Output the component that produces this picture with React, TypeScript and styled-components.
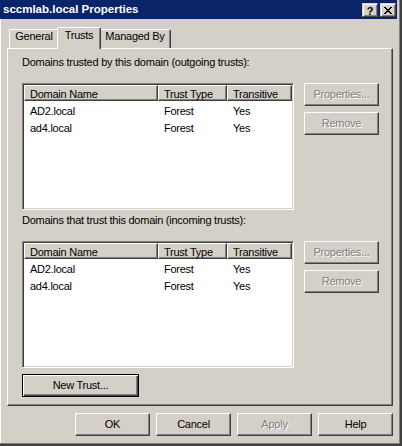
import React from "react";
import styled, { createGlobalStyle, css } from "styled-components";

const FACE = "#d4d0c8";
const SHADOW = "#808080";
const DARK = "#404040";
const HILITE = "#ffffff";
const CAPTION = "#0a246a";

const Global = createGlobalStyle`
  html, body { margin: 0; padding: 0; background: ${FACE}; }
  body { font-family: "Liberation Sans", Arial, sans-serif; font-size: 11px; }
  *, *::before, *::after { box-sizing: border-box; }
`;

const Window = styled.div`
  width: 402px;
  height: 446px;
  background: ${FACE};
  display: flex;
  flex-direction: column;
  box-shadow: inset -1px -1px 0 ${DARK}, inset -2px -2px 0 ${DARK},
    inset -3px -3px 0 ${SHADOW}, inset 1px 0 0 ${HILITE};
  color: #000;
  font-family: "Liberation Sans", Arial, sans-serif;
  font-size: 11px;
  letter-spacing: -0.25px;
  overflow: hidden;
`;

const TitleBar = styled.div`
  height: 19px;
  margin-right: 5px;
  background: ${CAPTION};
  display: flex;
  align-items: flex-start;
  justify-content: space-between;
  padding: 0 1px 0 3px;
`;

const TitleText = styled.span`
  color: #fff;
  font-weight: bold;
  font-size: 11.5px;
  line-height: 19px;
  letter-spacing: 0;
  white-space: nowrap;
`;

const CaptionButtons = styled.div`
  display: flex;
  gap: 2px;
  margin-top: 3px;
`;

const CaptionButton = styled.div`
  width: 16px;
  height: 14px;
  background: ${FACE};
  border: 1px solid;
  border-color: ${FACE} ${DARK} ${DARK} ${FACE};
  box-shadow: inset 1px 1px 0 ${HILITE}, inset -1px -1px 0 ${SHADOW};
  display: flex;
  align-items: center;
  justify-content: center;
  font-weight: bold;
  font-size: 11px;
  line-height: 12px;
  letter-spacing: 0;
  color: #000;
  padding-top: 1px;
`;

const TabStrip = styled.div`
  display: flex;
  align-items: flex-end;
  height: 21px;
  margin: 8px 0 0 9px;
`;

const Tab = styled.div<{ $active?: boolean; $w: number }>`
  width: ${(p) => p.$w}px;
  height: 19px;
  background: ${FACE};
  border-top: 1px solid ${HILITE};
  border-left: 1px solid ${HILITE};
  border-right: 1px solid ${DARK};
  box-shadow: inset -1px 0 0 ${SHADOW};
  border-radius: 2px 2px 0 0;
  line-height: 13px;
  text-align: center;
  white-space: nowrap;
  ${(p) =>
    p.$active &&
    css`
      height: 22px;
      margin: 0 -2px -1px;
      padding-top: 1px;
      position: relative;
      z-index: 1;
    `}
`;

const Panel = styled.div`
  margin-left: 7px;
  width: 386px;
  height: 358px;
  border: 1px solid;
  border-color: ${HILITE} ${DARK} ${DARK} ${HILITE};
  box-shadow: inset -1px -1px 0 ${SHADOW};
  padding: 7px 0 0 14px;
  display: flex;
  flex-direction: column;
  align-items: flex-start;
`;

const Label = styled.div<{ $gapTop?: number }>`
  line-height: 13px;
  margin-top: ${(p) => p.$gapTop ?? 0}px;
  white-space: nowrap;
`;

const ListRow = styled.div`
  display: grid;
  grid-template-columns: 272px 75px;
  column-gap: 10px;
  align-items: start;
  margin-top: 14px;
`;

const ListView = styled.div`
  width: 272px;
  height: 127px;
  background: #fff;
  border: 1px solid;
  border-color: ${SHADOW} ${HILITE} ${HILITE} ${SHADOW};
  box-shadow: inset 1px 1px 0 ${DARK}, inset -1px -1px 0 ${FACE};
  padding: 1px;
  overflow: hidden;
`;

const Header = styled.div`
  display: flex;
  height: 16px;
`;

const HeaderCell = styled.div<{ $w: number }>`
  width: ${(p) => p.$w}px;
  flex: none;
  height: 16px;
  background: ${FACE};
  border: 1px solid;
  border-color: ${HILITE} ${DARK} ${DARK} ${HILITE};
  box-shadow: inset -1px -1px 0 ${SHADOW};
  padding: 2px 0 0 5px;
  line-height: 12px;
  white-space: nowrap;
  overflow: hidden;
`;

const Row = styled.div`
  display: flex;
  height: 17px;
`;

const Cell = styled.div<{ $w: number }>`
  width: ${(p) => p.$w}px;
  flex: none;
  padding: 3px 0 0 6px;
  line-height: 14px;
  white-space: nowrap;
  overflow: hidden;
`;

const ButtonStack = styled.div`
  display: flex;
  flex-direction: column;
  gap: 6px;
`;

const Button = styled.button<{ $w?: number; $default?: boolean }>`
  width: ${(p) => p.$w ?? 75}px;
  height: 23px;
  flex: none;
  font: inherit;
  letter-spacing: inherit;
  line-height: 13px;
  color: #000;
  background: ${FACE};
  border: 1px solid;
  border-color: ${HILITE} ${DARK} ${DARK} ${HILITE};
  box-shadow: inset -1px -1px 0 ${SHADOW};
  border-radius: 0;
  padding: 0;
  text-align: center;
  &:disabled {
    color: ${SHADOW};
    text-shadow: 1px 1px 0 ${HILITE};
  }
  ${(p) =>
    p.$default &&
    css`
      border: 1px solid #000;
      box-shadow: inset 1px 1px 0 ${HILITE}, inset -1px -1px 0 ${DARK},
        inset -2px -2px 0 ${SHADOW};
    `}
`;

const NewTrustRow = styled.div`
  margin-top: 6px;
`;

const Footer = styled.div`
  display: flex;
  gap: 6px;
  margin: 7px 0 0 75px;
`;

const CloseGlyph = () => {
  const rows = [
    [0, 1, 6, 7],
    [1, 2, 5, 6],
    [2, 3, 4, 5],
    [3, 4],
    [2, 3, 4, 5],
    [1, 2, 5, 6],
    [0, 1, 6, 7],
  ];
  return (
    <svg width="8" height="7" viewBox="0 0 8 7" shapeRendering="crispEdges">
      {rows.map((cols, y) =>
        cols.map((x) => <rect key={`${x}-${y}`} x={x} y={y} width="1" height="1" fill="#000" />)
      )}
    </svg>
  );
};

const columns = [
  { title: "Domain Name", w: 134 },
  { title: "Trust Type", w: 69 },
  { title: "Transitive", w: 65 },
];

const trusts = [
  ["AD2.local", "Forest", "Yes"],
  ["ad4.local", "Forest", "Yes"],
];

const TrustList = () => (
  <ListView>
    <Header>
      {columns.map((c) => (
        <HeaderCell key={c.title} $w={c.w}>
          {c.title}
        </HeaderCell>
      ))}
    </Header>
    {trusts.map((r) => (
      <Row key={r[0]}>
        {r.map((v, i) => (
          <Cell key={i} $w={columns[i].w}>
            {v}
          </Cell>
        ))}
      </Row>
    ))}
  </ListView>
);

const TrustSection = ({ label, gapTop }: { label: string; gapTop?: number }) => (
  <>
    <Label $gapTop={gapTop}>{label}</Label>
    <ListRow>
      <TrustList />
      <ButtonStack>
        <Button disabled>Properties...</Button>
        <Button disabled>Remove</Button>
      </ButtonStack>
    </ListRow>
  </>
);

export default function App() {
  return (
    <>
      <Global />
      <Window>
        <TitleBar>
          <TitleText>sccmlab.local Properties</TitleText>
          <CaptionButtons>
            <CaptionButton>?</CaptionButton>
            <CaptionButton>
              <CloseGlyph />
            </CaptionButton>
          </CaptionButtons>
        </TitleBar>
        <TabStrip>
          <Tab $w={50}>General</Tab>
          <Tab $w={44} $active>
            Trusts
          </Tab>
          <Tab $w={72}>Managed By</Tab>
        </TabStrip>
        <Panel>
          <TrustSection label="Domains trusted by this domain (outgoing trusts):" />
          <TrustSection label="Domains that trust this domain (incoming trusts):" gapTop={4} />
          <NewTrustRow>
            <Button $w={117} $default>
              New Trust...
            </Button>
          </NewTrustRow>
        </Panel>
        <Footer>
          <Button>OK</Button>
          <Button>Cancel</Button>
          <Button disabled>Apply</Button>
          <Button>Help</Button>
        </Footer>
      </Window>
    </>
  );
}
